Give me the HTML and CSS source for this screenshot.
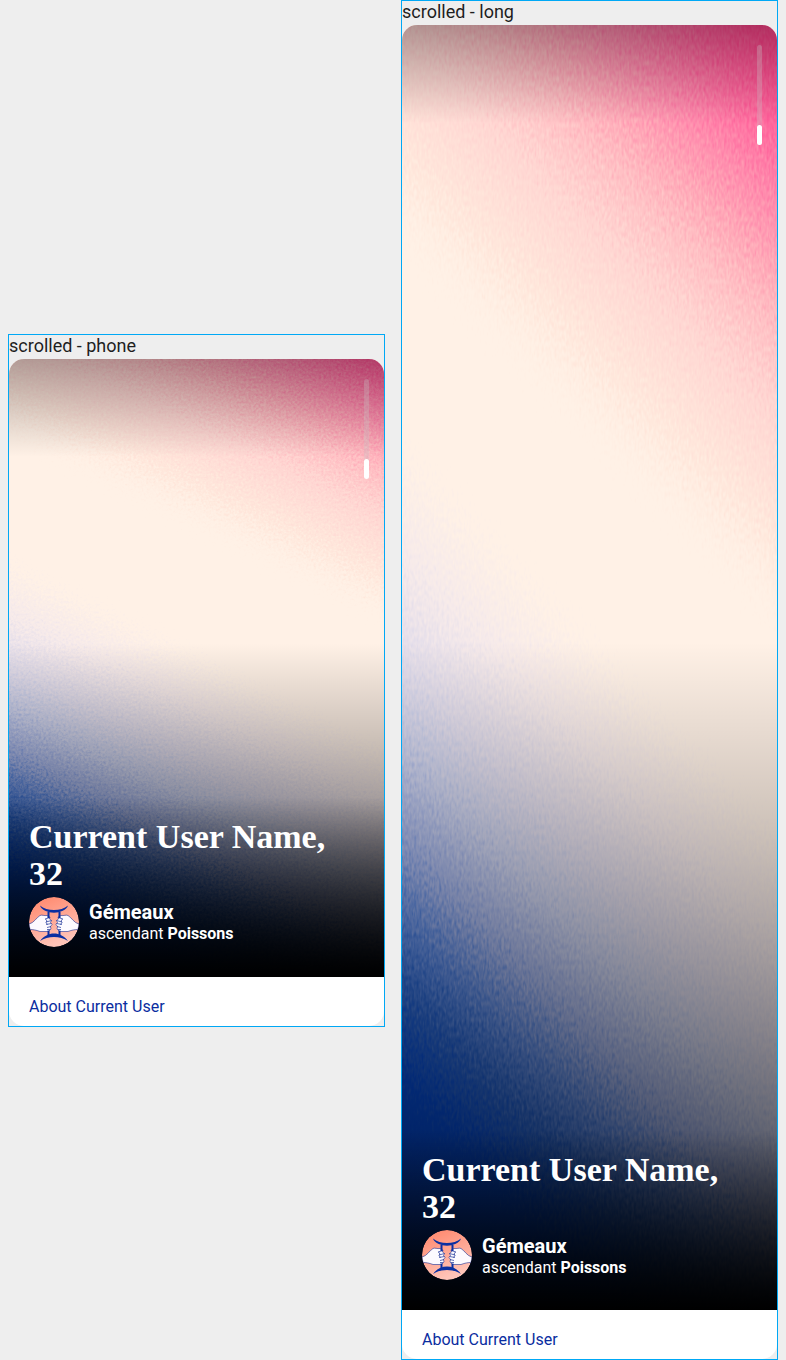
FILE: index.html
```html
<!DOCTYPE html>
<html lang="en">
<head>
<meta charset="utf-8">
<meta name="viewport" content="width=device-width, initial-scale=1">
<title>Profile - scrolled</title>
<link rel="stylesheet" href="styles.css">
</head>
<body>
<svg class="defs" aria-hidden="true">
  <defs>
    <linearGradient id="blue" gradientUnits="userSpaceOnUse" x1="0" y1="644" x2="184" y2="272">
      <stop offset="0" stop-color="#0040d8"/>
      <stop offset=".29" stop-color="#044cd8"/>
      <stop offset=".38" stop-color="#2a64cc"/>
      <stop offset=".46" stop-color="#5f89dd"/>
      <stop offset=".54" stop-color="#a0b0e4"/>
      <stop offset=".64" stop-color="#cacfea"/>
      <stop offset=".72" stop-color="#e0dbea"/>
      <stop offset=".84" stop-color="#f6eaea"/>
      <stop offset=".95" stop-color="#fff1e6"/>
    </linearGradient>
    <linearGradient id="pink" gradientUnits="userSpaceOnUse" x1="375" y1="0" x2="259" y2="238">
      <stop offset="0" stop-color="#ff4088"/>
      <stop offset=".13" stop-color="#ff5c98"/>
      <stop offset=".27" stop-color="#ff84aa"/>
      <stop offset=".41" stop-color="#ffaab8"/>
      <stop offset=".5" stop-color="#ffc0c4"/>
      <stop offset=".63" stop-color="#ffd6d2"/>
      <stop offset=".84" stop-color="#ffe8dc"/>
      <stop offset="1" stop-color="#fff1e6" stop-opacity="0"/>
    </linearGradient>
    <filter id="grain" filterUnits="userSpaceOnUse" x="-60" y="-100" width="495" height="800" color-interpolation-filters="sRGB">
      <feTurbulence type="fractalNoise" baseFrequency=".4" numOctaves="2" seed="4" result="noise"/>
      <feDisplacementMap in="SourceGraphic" in2="noise" scale="60" xChannelSelector="R" yChannelSelector="G"/>
      <feGaussianBlur stdDeviation=".4"/>
    </filter>
    <linearGradient id="coral" x1="0" y1="0" x2=".4" y2="1">
      <stop offset="0" stop-color="#ff8468"/>
      <stop offset="1" stop-color="#ffc4b8"/>
    </linearGradient>
    <symbol id="gemini" viewBox="0 0 50 50">
      <circle cx="25" cy="25" r="25" fill="url(#coral)"/>
      <g id="hand">
        <path d="M0 27C5 26 7 21 11 18.500C13 17.500 15 19 18 18.500L21 20L20.500 22L22.500 23.500L21.500 25.500L23 27.500L21.500 29.500L22 32L19.500 34.500L11 34.500C7 33 4 32.500 1 32.500Z" fill="#fdfaff" stroke="#1a2f96" stroke-width=".6"/>
        <path d="M16 22L21 20.500M17 25L22.500 23.500M17 27.500L22.500 26.500M18 30.500L22 29.500M18 32.500L21 32.500M16.500 22L18 24L17 25.500L18.500 27.500" fill="none" stroke="#1a2f96" stroke-width=".7"/>
        <path d="M19.500 15V21M19.500 33.500V39" fill="none" stroke="#0a2fa2" stroke-width="2"/>
      </g>
      <use href="#hand" transform="matrix(-1 0 0 1 50 0)"/>
      <path d="M11 8.500C18 14.500 32 14.500 39 8.500C36 18 14 18 11 8.500ZM11 44C18 34 32 34 39 44C31 38.500 19 38.500 11 44Z" fill="#0a2fa2"/>
    </symbol>
  </defs>
</svg>

<main class="board">
  <section class="frame">
    <p class="frame-label">scrolled - phone</p>
    <article class="card card-phone">
      <div class="hero">
        <svg class="art" viewBox="0 0 375 618" preserveAspectRatio="none" aria-hidden="true">
          <g filter="url(#grain)">
            <rect x="-60" y="-100" width="495" height="800" fill="url(#blue)"/>
            <rect x="-60" y="-60" width="495" height="800" fill="url(#pink)" transform="translate(0 -30)"/>
          </g>
        </svg>
        <div class="shade"></div>
        <div class="progress"><div class="progress-thumb"></div></div>
        <div class="info">
          <h1 class="name">Current User Name, 32</h1>
          <div class="sign">
            <svg class="sign-icon" role="img" aria-label="Gémeaux"><use href="#gemini"/></svg>
            <div>
              <p class="sign-name">Gémeaux</p>
              <p class="sign-rising">ascendant <b>Poissons</b></p>
            </div>
          </div>
        </div>
      </div>
      <div class="about"><h2 class="about-title">About Current User</h2></div>
    </article>
  </section>

  <section class="frame">
    <p class="frame-label">scrolled - long</p>
    <article class="card card-long">
      <div class="hero">
        <svg class="art" viewBox="0 0 375 618" preserveAspectRatio="none" aria-hidden="true">
          <g filter="url(#grain)">
            <rect x="-60" y="-100" width="495" height="800" fill="url(#blue)"/>
            <rect x="-60" y="-100" width="495" height="800" fill="url(#pink)"/>
          </g>
        </svg>
        <div class="shade"></div>
        <div class="progress"><div class="progress-thumb"></div></div>
        <div class="info">
          <h1 class="name">Current User Name, 32</h1>
          <div class="sign">
            <svg class="sign-icon" role="img" aria-label="Gémeaux"><use href="#gemini"/></svg>
            <div>
              <p class="sign-name">Gémeaux</p>
              <p class="sign-rising">ascendant <b>Poissons</b></p>
            </div>
          </div>
        </div>
      </div>
      <div class="about"><h2 class="about-title">About Current User</h2></div>
    </article>
  </section>
</main>
</body>
</html>
```

FILE: styles.css
```css
* {
  box-sizing: border-box;
}

body {
  margin: 0;
  background: #eeeeee;
  color: #1e1e1e;
  font-family: Roboto, "Liberation Sans", sans-serif;
  font-size: 16px;
  line-height: 19px;
}

h1, h2, p {
  margin: 0;
}

.defs {
  position: absolute;
  width: 0;
  height: 0;
}

.board {
  display: flex;
  align-items: center;
  gap: 16px;
  min-height: 100vh;
  padding: 0 8px;
}

.frame {
  flex: 1;
  min-width: 0;
  border: 1px solid #00a8f5;
}

.frame-label {
  padding-bottom: 2px;
  font-size: 18px;
  line-height: 22px;
}

.card {
  display: flex;
  flex-direction: column;
  overflow: hidden;
  border-radius: 15px;
  background: #ffffff;
}

.card-phone {
  aspect-ratio: 375 / 667;
}

.card-long {
  aspect-ratio: 375 / 1334;
}

.hero {
  position: relative;
  display: flex;
  flex: 1;
  flex-direction: column;
  justify-content: flex-end;
  overflow: hidden;
  background: #fff1e6;
}

.art,
.shade {
  position: absolute;
  inset: 0;
  width: 100%;
  height: 100%;
}

.shade {
  background:
    linear-gradient(rgba(0, 0, 0, .3), transparent) top / 100% 98px no-repeat,
    linear-gradient(transparent, rgba(0, 0, 0, .7)) bottom / 100% 54% no-repeat;
}

.card-long .shade {
  background:
    linear-gradient(rgba(0, 0, 0, .3), transparent) top / 100% 98px no-repeat,
    linear-gradient(transparent, rgba(0, 0, 0, .7)) bottom / 100% 52% no-repeat;
}

.progress {
  position: absolute;
  top: 20px;
  right: 15px;
  display: flex;
  flex-direction: column;
  justify-content: flex-end;
  width: 5px;
  height: 100px;
  border-radius: 3px;
  background: rgba(200, 200, 200, .3);
}

.progress-thumb {
  height: 20px;
  border-radius: 3px;
  background: #ffffff;
}

.info {
  position: relative;
  display: flex;
  flex-direction: column;
  gap: 5px;
  padding: 21px 20px 30px;
  background: linear-gradient(transparent, #000000);
  color: #ffffff;
}

.name {
  font-family: "Liberation Serif", serif;
  font-size: 34px;
  font-weight: 700;
  line-height: 37px;
}

.sign {
  display: flex;
  align-items: center;
  gap: 10px;
}

.sign-icon {
  width: 50px;
  height: 50px;
  border-radius: 50%;
}

.sign-name {
  font-size: 20px;
  font-weight: 700;
  line-height: 24px;
}

.about {
  padding: 20px 20px 10px;
}

.about-title {
  color: #0a2d9f;
  font-size: 16px;
  font-weight: 400;
  line-height: 19px;
}
```
